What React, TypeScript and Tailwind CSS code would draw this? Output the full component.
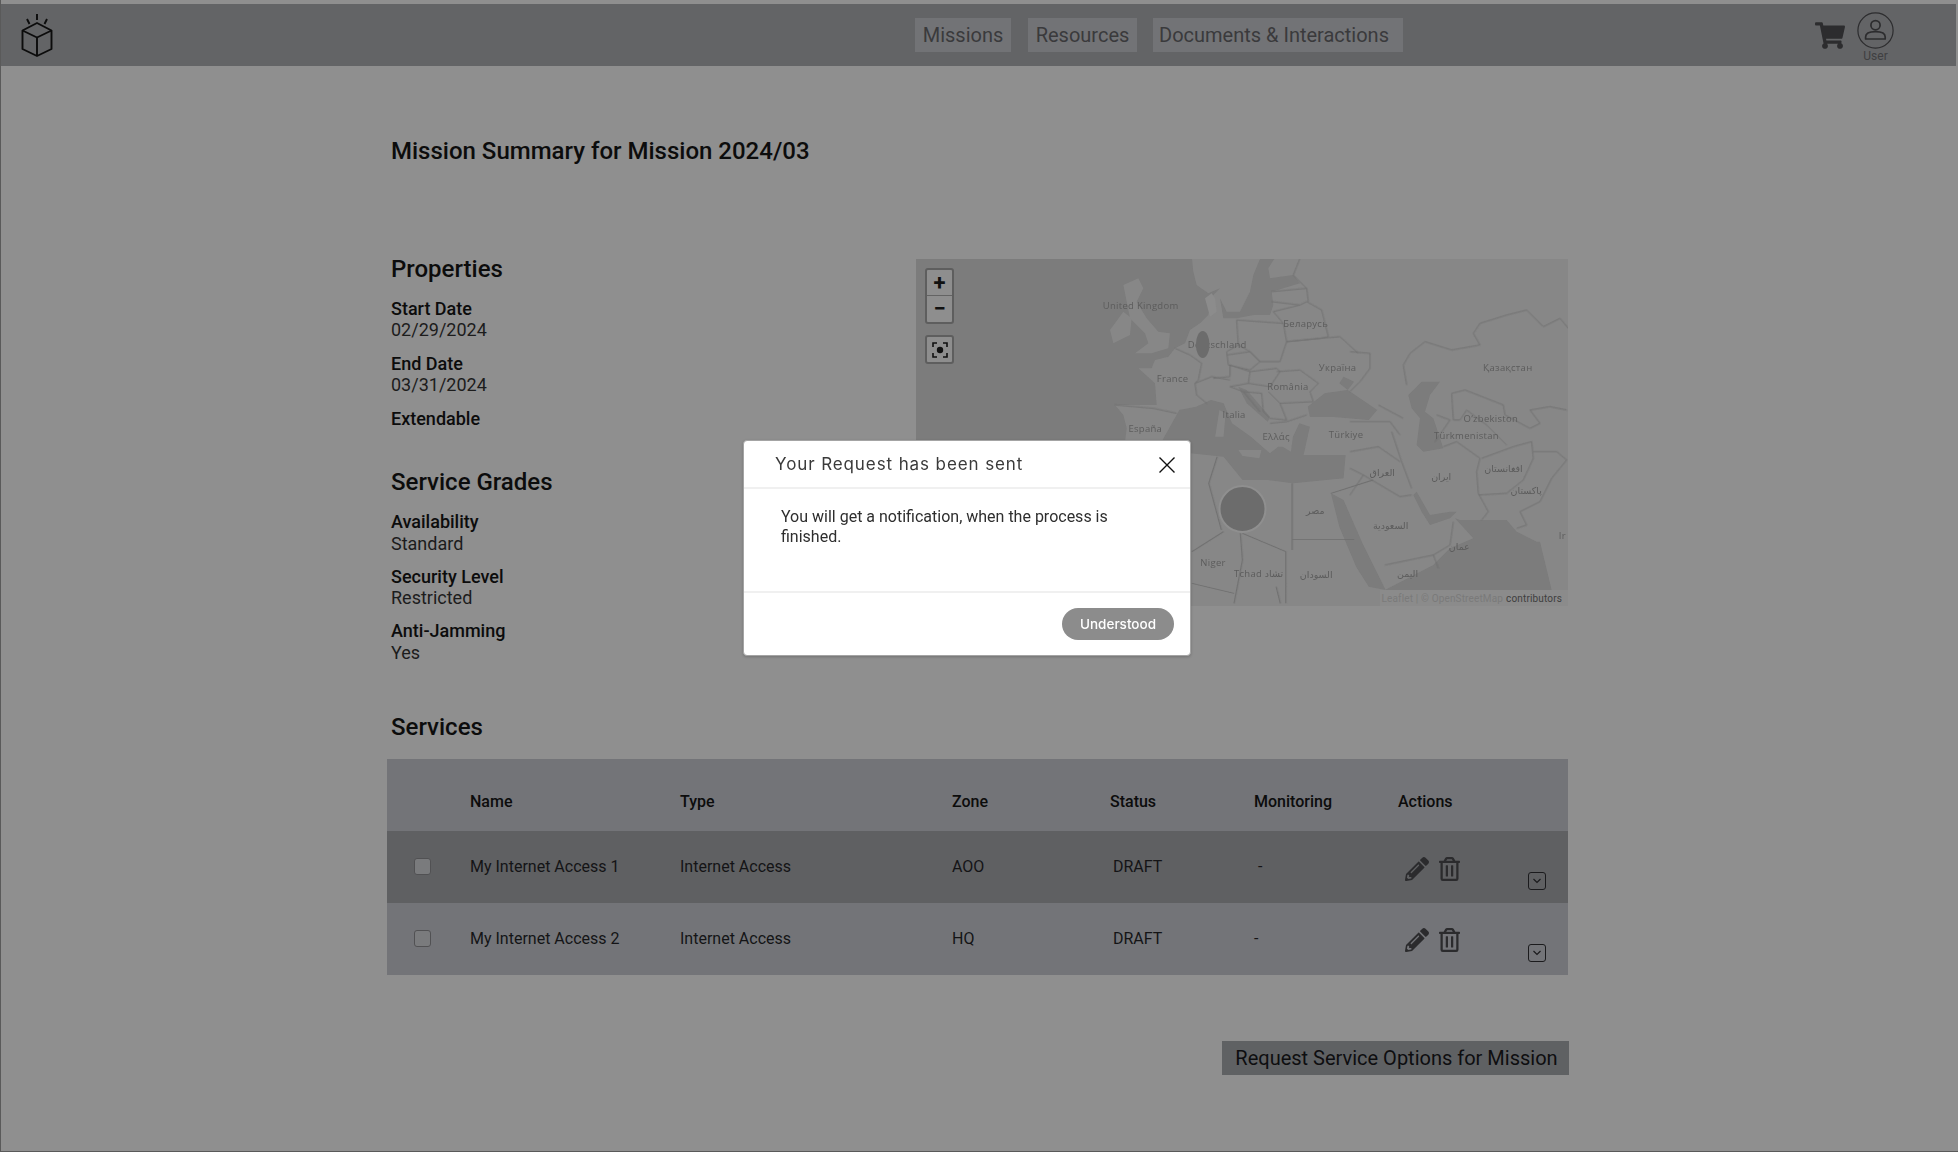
import React from "react";
import { FaShoppingCart, FaPencilAlt, FaRegTrashAlt } from "react-icons/fa";

const Field = ({ label, value }: { label: string; value?: string }) => (
  <div className="pb-[12px] text-[18px] leading-[21.5px] text-[#0c0c0c]">
    <div className="font-medium">{label}</div>
    {value && <div className="font-normal text-[#1c1c1c]">{value}</div>}
  </div>
);

const NavBtn = ({ w, children }: { w: string; children: string }) => (
  <div className={`flex h-[34px] items-center bg-[#727376] text-[20px] text-[#3a3a3c] ${w}`}>{children}</div>
);

const Logo = () => (
  <svg width="32" height="44" viewBox="0 0 32 44" fill="none" stroke="#0c0c0c" strokeWidth="1.9" className="block">
    <path d="M16 10 L30.5 17.5 L30.5 36 L16 43 L1.5 36 L1.5 17.5 Z" strokeLinejoin="round" />
    <path d="M1.5 17.5 L16 24.5 L30.5 17.5 M16 24.5 L16 43" strokeLinejoin="round" />
    <path d="M16 1 V7 M6 6 L8.5 11 M26 6 L23.5 11" />
  </svg>
);

const UserIcon = () => (
  <svg width="37" height="37" viewBox="0 0 37 37" fill="none" stroke="#2c2c2e" strokeWidth="1.2">
    <circle cx="18.5" cy="18.5" r="17.6" />
    <circle cx="18.5" cy="13.2" r="4.6" strokeWidth="1.7" />
    <path d="M8.6 27 V25 C8.6 21.5 12.5 19.7 18.5 19.7 C24.5 19.7 28.2 21.5 28.2 25 V27 Z" strokeWidth="1.7" strokeLinejoin="round" />
  </svg>
);

const Chevron = () => (
  <div className="flex h-[18px] w-[18px] items-center justify-center rounded-[3px] border border-[#1b1b1d]">
    <svg width="10" height="6" viewBox="0 0 10 6" fill="none" stroke="#1b1b1d" strokeWidth="1.2"><path d="M1.5 1 L5 4.5 L8.5 1" /></svg>
  </div>
);

const cols = "grid grid-cols-[83px_210px_272px_158px_144px_144px_170px]";

const Row = ({ name, zone, dash, bg, iconPad }: { name: string; zone: string; dash: string; bg: string; iconPad: string }) => (
  <div className={`${cols} relative h-[72px] items-center text-[16px] font-normal text-[#141416] ${bg}`}>
    <div className="pl-[27px]">
      <div className="h-[17px] w-[17px] rounded-[3px] border border-[#515153] bg-[#7a7b7d]" />
    </div>
    <div>{name}</div>
    <div>{"Internet Access"}</div>
    <div>{zone}</div>
    <div className="pl-[3px]">DRAFT</div>
    <div className={dash}>-</div>
    <div className={`flex items-center pl-[7px] text-[#2b2b2d] ${iconPad}`}>
      <FaPencilAlt className="h-[24px] w-[24px]" />
      <FaRegTrashAlt className="ml-[10px] h-[24px] w-[21px]" />
    </div>
    <div className="absolute left-[1141px] top-[41px]"><Chevron /></div>
  </div>
);

const Z4 = "translate(910 250) scale(0.4209 0.3333)";
const Z10 = "translate(1080 255) scale(0.3333)";
const Z12 = "translate(1350 255) scale(0.3333)";
const SEA = "#7b7b7b";
const LAND = "#878787";
const LINE = "#6f6f6f";

const labels: [number, number, string][] = [
  [548, 178, "United Kingdom"], [940, 231, "Беларусь"], [730, 293, "Deutschland"], [1016, 364, "Україна"],
  [1420, 364, "Қазақстан"], [624, 396, "France"], [898, 420, "România"], [770, 505, "Italia"],
  [559, 547, "España"], [870, 570, "Ελλάς"], [1036, 565, "Türkiye"], [1380, 516, "O‘zbekiston"],
  [1322, 566, "Türkmenistan"], [1410, 665, "افغانستان"], [1122, 679, "العراق"], [1262, 691, "ایران"],
  [1464, 732, "پاکستان"], [963, 791, "مصر"], [1142, 836, "السعودية"], [1305, 899, "عمان"],
  [720, 948, "Niger"], [828, 981, "Tchad تشاد"], [965, 983, "السودان"], [1182, 981, "اليمن"], [1550, 868, "Ir"],
];

const MapView = () => (
  <div className="relative ml-[134px] h-[347px] w-[652px] overflow-hidden bg-[#878787]">
    <svg viewBox="916 259 652 347" width="652" height="347" className="absolute inset-0 block">
      <defs>
        <filter id="soft" x="-5%" y="-5%" width="110%" height="110%"><feGaussianBlur stdDeviation="0.55" /></filter>
      </defs>
      <g filter="url(#soft)" strokeLinejoin="round">
        <g transform={Z10} fill={SEA}>
          <path d="M-500 0 L335 0 L340 50 L350 90 L385 115 L420 100 L395 125 L385 180 L360 205 L330 225 L315 265 L285 280 L265 305 L225 315 L215 340 L175 340 L225 385 L230 450 L105 450 L130 480 L140 520 L130 600 L-500 600 Z" />
          <path d="M590 0 L565 40 L570 70 L640 60 L660 85 L575 110 L580 150 L570 180 L520 180 L470 190 L430 190 L420 130 L440 170 L480 170 L510 110 L520 60 L545 0 Z" />
          <g fill={LAND}>
            <path d="M90 225 L130 170 L155 190 L150 240 L100 265 Z" />
            <path d="M130 90 L175 70 L190 100 L170 140 L200 190 L235 230 L270 235 L265 280 L215 295 L165 295 L205 265 L195 235 L150 190 L140 140 Z" />
            <path d="M395 115 L375 130 L390 185 L410 170 L405 130 Z" fill="#8c8c8c" />
          </g>
        </g>
        <g transform={Z4} fill={SEA}>
          <path d="M600 570 L640 480 L680 470 L715 450 L745 460 L765 520 L810 560 L855 610 L875 590 L885 590 L905 605 L910 560 L925 520 L950 530 L935 615 L1035 615 L1030 685 L910 700 L850 690 L790 690 L745 620 L667 610 L600 600 Z" />
          <path d="M780 410 L800 420 L855 500 L850 515 L800 460 Z" />
          <path d="M945 470 L985 430 L1040 420 L1110 480 L1090 510 L1000 500 L950 500 Z" />
          <path d="M1030 380 L1055 395 L1040 420 L1020 400 Z" />
          <path d="M1000 730 L1030 750 L1075 880 L1130 1020 L1090 1010 L1060 950 L1020 830 Z" />
          <g fill={LAND}>
            <path d="M735 480 L750 490 L745 560 L725 560 Z" />
            <path d="M780 600 L835 600 L830 625 L790 618 Z" />
          </g>
        </g>
        <g transform={Z12} fill={SEA}>
          <path d="M105 1005 L250 930 L300 880 L370 850 L315 790 L330 795 L470 795 L500 830 L560 860 L570 860 L605 1005 Z" />
          <path d="M200 710 L240 780 L300 770 L320 770 L300 790 L240 810 L215 770 L190 720 Z" />
          <path d="M175 420 L215 380 L270 380 L240 420 L225 470 L250 490 L280 580 L220 590 L200 570 L210 490 L185 460 Z" />
        </g>
        <g fill="none" stroke={LINE} strokeWidth="2.6" transform={Z10}>
          <path d="M285 280 L330 300 L365 325 L355 375 L345 385 L350 420 L380 445 M345 385 L395 365 L450 375 M470 195 L475 270 L440 290 L445 330 L510 345 M470 195 L610 205 L620 260 L600 320 L540 320 L510 290 L475 270 M440 300 L510 290 L540 320 L510 345 M400 370 L450 365 L450 330 L510 350 L505 385 L450 395 M510 350 L590 340 L600 350 L570 395 L505 385 M590 350 L660 345 L715 385 L690 410 L700 440 L600 445 L565 410 M610 205 L580 170 L660 150 L680 140 L725 165 L745 245 L720 250 L620 260 M575 140 L660 150 M575 110 L680 100 L685 140 M620 260 L720 250 L780 245 L835 295 M105 450 L220 460 L290 475 M450 395 L490 410 L545 415 L550 470 L570 490 M600 445 L620 495 L570 490 M490 410 L540 470 M660 10 L640 60 L680 100 M570 505 L620 500 L680 480" />
        </g>
        <g fill="none" stroke={LINE} strokeWidth="2.6" transform={Z12}>
          <path d="M170 390 L160 330 L180 295 L225 260 L305 285 L390 270 L370 235 L390 205 L470 180 L530 165 L580 215 L630 190 L655 220 M305 415 L345 405 L460 450 L465 480 L540 520 L570 505 L540 465 L600 455 L650 465 M305 415 L310 495 L330 495 L350 465 L410 510 L470 570 M260 480 L300 495 L255 560 M280 575 L320 560 L390 610 M390 610 L380 650 L385 715 L415 770 L395 795 M385 720 L470 715 L520 675 L550 610 L545 560 L490 575 L395 610 M550 590 L620 590 L650 615 L605 670 L570 740 L510 770 L530 810 L500 820 M125 530 L155 620 L185 700 M0 590 L85 575 L150 620 M40 660 L150 725 L185 720 M105 930 L250 900 L300 870 L310 800 M250 900 L265 940 M120 500 L150 540 M60 295 L0 290 M60 295 L60 340 L30 380 L0 410 M85 450 L160 490 M0 500 L120 500 M0 640 L40 660 L0 720" />
        </g>
        <g fill="none" stroke={LINE} strokeWidth="2.6" transform={Z4}>
          <path d="M908 700 L908 900 M908 868 L1055 868 M893 905 L893 1060 M790 850 L893 905 M745 845 L670 905 M785 850 L790 930 L770 1060 M730 620 L710 700 L740 840 M1000 730 L1100 690 M670 1000 L770 1030 M880 1060 L870 1010" />
        </g>
      </g>
      <g transform={Z4} fontFamily="'Open Sans','DejaVu Sans',sans-serif" fill="#5c5c5c">
        {labels.map(([x, y, t]) => (
          <text key={t} transform={`translate(${x} ${y}) scale(2.376 3)`} textAnchor="middle" fontSize="9.5" letterSpacing="0.3">{t}</text>
        ))}
      </g>
      <ellipse cx="1202.7" cy="344.5" rx="6.8" ry="13.5" fill="#6c6c6c" />
      <circle cx="1242.5" cy="509" r="23" fill="#6c6c6c" stroke="#8f8f8f" strokeWidth="2" />
    </svg>
    <div className="absolute left-[9px] top-[9px] w-[29px] rounded-[3px] border-2 border-[#5e5e5e] bg-[#8e8e8e]">
      <div className="flex h-[26px] items-center justify-center border-b border-[#636363] text-[22px] font-bold leading-none text-[#111]">+</div>
      <div className="flex h-[26px] items-center justify-center text-[22px] font-bold leading-none text-[#111]">−</div>
    </div>
    <div className="absolute left-[9px] top-[76px] flex h-[29px] w-[29px] items-center justify-center rounded-[3px] border-2 border-[#5e5e5e] bg-[#8e8e8e]">
      <svg width="16" height="16" viewBox="0 0 16 16" fill="none" stroke="#111" strokeWidth="1.6">
        <path d="M1 5 V1 H5 M11 1 H15 V5 M15 11 V15 H11 M5 15 H1 V11" />
        <circle cx="8" cy="8" r="3.2" fill="#111" stroke="none" />
      </svg>
    </div>
    <div className="absolute bottom-0 right-0 flex h-[16px] w-[188px] items-center justify-end whitespace-nowrap bg-[#8b8b8b] pr-[6px] text-[10px] tracking-[0.15px] text-[#7a7a7a]">
      <span>{"Leaflet | © OpenStreetMap"}</span><span className="ml-[3px] text-[#3e3e3e]">contributors</span>
    </div>
  </div>
);

export default function App() {
  return (
    <div className="relative h-[1152px] w-full overflow-hidden border-b border-l border-[#5a5a5a] bg-[#8f8f8f] pt-1 font-['Roboto',sans-serif] text-[#0c0c0c]">
      <header className="relative flex h-[62px] w-[1955px] items-center bg-[#636466]">
        <div className="ml-[20px]"><Logo /></div>
        <nav className="ml-[862px] flex gap-[17px]">
          <NavBtn w="w-[96px] justify-center">Missions</NavBtn>
          <NavBtn w="w-[109px] justify-center">Resources</NavBtn>
          <NavBtn w="-ml-[1px] w-[250px] pl-[6px]">{"Documents & Interactions"}</NavBtn>
        </nav>
        <FaShoppingCart className="ml-[412px] h-[27px] w-[30px] text-[#2c2c2e]" />
        <div className="ml-[12px] mt-[5px] flex flex-col items-center">
          <UserIcon />
          <span className="text-[12px] leading-[14px] text-[#3f3f41]">User</span>
        </div>
      </header>

      <main className="pl-[386px]">
        <h1 className="ml-[4px] mt-[69px] text-[24px] font-medium leading-[32px]">Mission Summary for Mission 2024/03</h1>

        <div className="mt-[92px] flex">
          <div className="-mt-[6px] ml-[4px] w-[391px]">
            <h2 className="mb-[12.6px] text-[24px] font-medium leading-[32px]">Properties</h2>
            <Field label="Start Date" value="02/29/2024" />
            <Field label="End Date" value="03/31/2024" />
            <Field label="Extendable" />
            <h2 className="mb-[13px] mt-[25px] text-[24px] font-medium leading-[32px]">Service Grades</h2>
            <Field label="Availability" value="Standard" />
            <div className="-mt-[0.5px]"><Field label="Security Level" value="Restricted" /></div>
            <div className="-mt-[0.5px]"><Field label="Anti-Jamming" value="Yes" /></div>
          </div>
          <MapView />
        </div>

        <h2 className="ml-[4px] mt-[35.5px] text-[24px] font-medium leading-[32px]">Services</h2>
        <section className="mt-[16px] w-[1181px]">
          <div className={`${cols} h-[72px] items-center bg-[#737478] pt-[15px] text-[16px] font-medium`}>
            <div />
            <div>Name</div>
            <div>Type</div>
            <div>Zone</div>
            <div>Status</div>
            <div>Monitoring</div>
            <div>Actions</div>
          </div>
          <Row name="My Internet Access 1" zone="AOO" dash="pl-[4px]" bg="bg-[#5f6062]" iconPad="pt-[5px]" />
          <Row name="My Internet Access 2" zone="HQ" dash="" bg="bg-[#737478]" iconPad="pt-[3px]" />
        </section>
        <div className="mt-[66px] flex w-[1182px] justify-end">
          <div className="flex h-[34px] w-[347px] items-center justify-center bg-[#5f6163] pl-[2px] text-[20px] text-[#0e0e10]">Request Service Options for Mission</div>
        </div>
      </main>

      <div className="absolute left-[742px] top-[440px] flex h-[216px] w-[448px] flex-col rounded-[4px] border border-[#a4a4a4] bg-white shadow-[0_1px_3px_rgba(0,0,0,0.2)]">
        <div className="relative flex h-[48px] shrink-0 items-center border-b-2 border-[#f0f0f0] pl-[31px] pt-[2px] font-['Inter',sans-serif] text-[17px] tracking-[0.9px] text-[#3a3a3a]">
          Your Request has been sent
          <svg width="16" height="16" viewBox="0 0 16 16" fill="none" stroke="#111" strokeWidth="1.4" className="absolute left-[415px] top-[16px]"><path d="M0.5 0.5 L15.5 15.5 M15.5 0.5 L0.5 15.5" /></svg>
        </div>
        <div className="h-[104px] shrink-0 border-b-2 border-[#f0f0f0] pl-[37px] pr-[60px] pt-[18px] text-[16px] font-normal leading-[20px] text-[#2e2e2e]">
          You will get a notification, when the process is finished.
        </div>
        <div className="flex flex-1 items-start justify-end pr-[16px] pt-[15px]">
          <div className="flex h-[32px] w-[112px] items-center justify-center rounded-full bg-[#8c8c8c] font-['Inter',sans-serif] text-[13.5px] font-medium text-white">Understood</div>
        </div>
      </div>
    </div>
  );
}
